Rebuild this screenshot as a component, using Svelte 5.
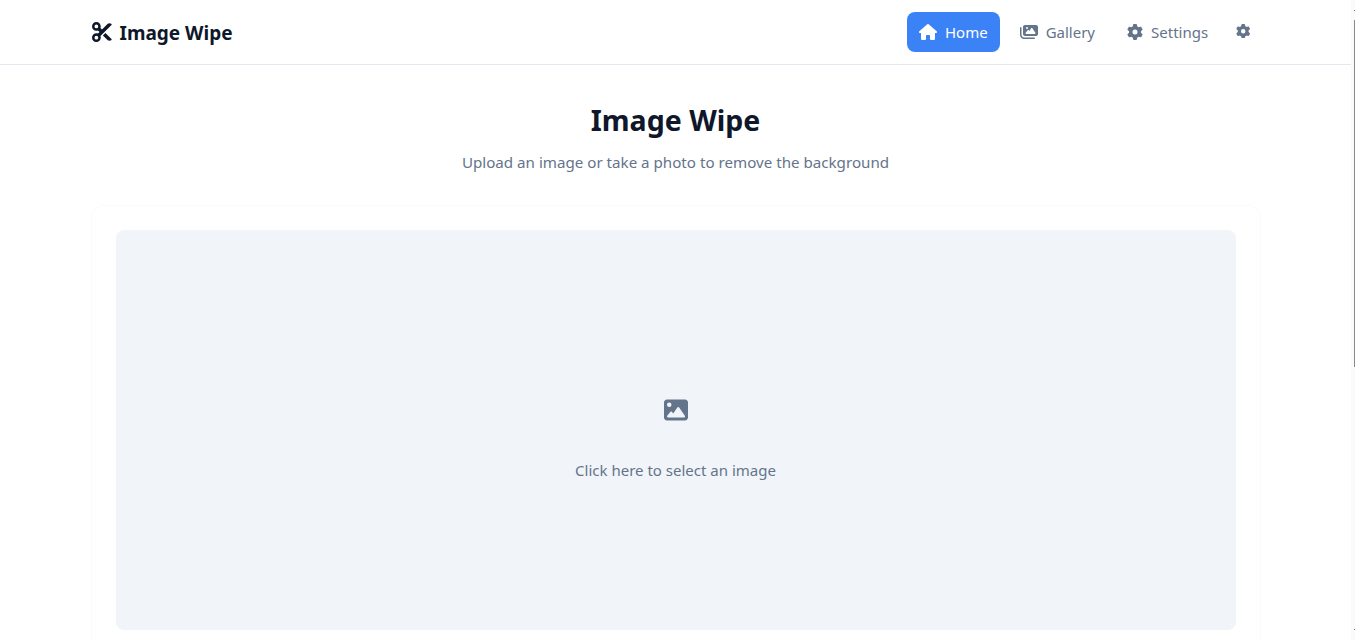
<script>
  const paths = {
    scissors:
      'M256 192l-39.500-39.500c4.900-12.600 7.500-26.200 7.500-40.500C224 50.100 173.900 0 112 0S0 50.100 0 112s50.100 112 112 112c14.300 0 27.900-2.700 40.500-7.500L192 256l-39.500 39.500c-12.600-4.900-26.200-7.500-40.500-7.500C50.100 288 0 338.100 0 400s50.100 112 112 112s112-50.100 112-112c0-14.300-2.700-27.900-7.500-40.500L499.200 76.800c7.100-7.100 7.100-18.500 0-25.600c-28.300-28.300-74.100-28.300-102.400 0L256 192zm22.600 150.600L396.800 460.800c28.300 28.300 74.100 28.300 102.400 0c7.100-7.100 7.100-18.500 0-25.600L342.600 278.600l-64 64zM64 112a48 48 0 1 1 96 0 48 48 0 1 1 -96 0zm48 240a48 48 0 1 1 0 96 48 48 0 1 1 0-96z',
    house:
      'M575.800 255.500c0 18-15 32.100-32 32.100h-32l.7 160.200c0 2.700-.2 5.400-.5 8.100V472c0 22.100-17.900 40-40 40H456c-1.100 0-2.200 0-3.300-.1c-1.400 .1-2.800 .1-4.200 .1H416 392c-22.100 0-40-17.900-40-40V448 384c0-17.700-14.300-32-32-32H256c-17.700 0-32 14.300-32 32v64 24c0 22.100-17.900 40-40 40H160 128.100c-1.500 0-3-.1-4.500-.2c-1.200 .1-2.400 .2-3.600 .2H104c-22.100 0-40-17.900-40-40V360c0-.9 0-1.900 .1-2.800V287.600H32c-18 0-32-14-32-32.100c0-9 3-17 10-24L266.400 8c7-7 15-8 22-8s15 2 21 7L564.800 231.500c8 7 12 15 11 24z',
    images:
      'M160 32c-35.300 0-64 28.700-64 64V320c0 35.300 28.700 64 64 64H512c35.300 0 64-28.700 64-64V96c0-35.300-28.700-64-64-64H160zM396 138.700l96 144c4.900 7.400 5.400 16.800 1.200 24.600S480.900 320 472 320H328 280 200c-9.200 0-17.600-5.300-21.600-13.600s-2.900-18.200 2.900-25.400l64-80c4.600-5.700 11.400-9 18.700-9s14.200 3.300 18.700 9l17.300 21.600 56-84C360.500 132 368 128 376 128s15.500 4 20 10.700zM192 128a32 32 0 1 1 64 0 32 32 0 1 1 -64 0zM48 120c0-13.300-10.700-24-24-24S0 106.700 0 120V344c0 75.100 60.900 136 136 136H456c13.300 0 24-10.700 24-24s-10.700-24-24-24H136c-48.600 0-88-39.400-88-88V120z',
    gear:
      'M495.900 166.600c3.200 8.700 .5 18.400-6.400 24.600l-43.300 39.400c1.100 8.300 1.700 16.800 1.700 25.400s-.6 17.100-1.700 25.400l43.300 39.400c6.900 6.200 9.600 15.900 6.400 24.600c-4.400 11.900-9.700 23.300-15.800 34.300l-4.700 8.100c-6.600 11-14 21.400-22.100 31.200c-5.900 7.200-15.700 9.600-24.500 6.800l-55.700-17.700c-13.400 10.300-28.200 18.900-44 25.400l-12.500 57.100c-2 9.100-9 16.300-18.200 17.800c-13.800 2.300-28 3.500-42.500 3.500s-28.700-1.200-42.500-3.500c-9.200-1.500-16.200-8.700-18.200-17.800l-12.500-57.100c-15.800-6.500-30.600-15.100-44-25.400L83.100 425.900c-8.800 2.800-18.600 .3-24.500-6.800c-8.100-9.800-15.500-20.200-22.100-31.200l-4.700-8.100c-6.100-11-11.400-22.400-15.800-34.300c-3.200-8.700-.5-18.400 6.400-24.600l43.300-39.400C64.600 273.100 64 264.600 64 256s.6-17.100 1.700-25.400L22.400 191.200c-6.900-6.200-9.600-15.900-6.400-24.600c4.400-11.900 9.700-23.300 15.800-34.300l4.700-8.100c6.600-11 14-21.400 22.100-31.200c5.900-7.200 15.700-9.600 24.500-6.800l55.700 17.700c13.400-10.300 28.200-18.900 44-25.400l12.500-57.100c2-9.100 9-16.300 18.200-17.800C227.300 1.200 241.500 0 256 0s28.700 1.200 42.500 3.500c9.200 1.500 16.200 8.700 18.200 17.800l12.500 57.100c15.800 6.500 30.600 15.100 44 25.400l55.700-17.700c8.800-2.800 18.600-.3 24.500 6.800c8.100 9.800 15.500 20.200 22.100 31.200l4.700 8.100c6.100 11 11.400 22.400 15.800 34.300zM256 336a80 80 0 1 0 0-160 80 80 0 1 0 0 160z',
    image:
      'M0 96C0 60.700 28.700 32 64 32H448c35.300 0 64 28.700 64 64V416c0 35.300-28.700 64-64 64H64c-35.300 0-64-28.700-64-64V96zM323.800 202.500c-4.500-6.600-11.900-10.500-19.800-10.500s-15.400 3.900-19.800 10.500l-87 127.600L170.700 297c-4.600-5.700-11.500-9-18.700-9s-14.200 3.300-18.700 9l-64 80c-5.800 7.200-6.900 17.100-2.900 25.400s12.400 13.600 21.600 13.600h96 32H424c8.900 0 17.100-4.900 21.200-12.800s3.600-17.400-1.400-24.700l-120-176zM112 192a48 48 0 1 0 0-96 48 48 0 1 0 0 96z'
  };

  const links = [
    { label: 'Home', icon: 'house', box: '0 0 576 512', wide: true, active: true },
    { label: 'Gallery', icon: 'images', box: '0 0 576 512', wide: true, active: false },
    { label: 'Settings', icon: 'gear', box: '0 0 512 512', wide: false, active: false }
  ];
</script>

<div class="page">
  <header class="topbar">
    <div class="topbar-inner">
      <div class="brand">
        <svg class="brand-icon" viewBox="0 0 512 512" fill="currentColor"><path d={paths.scissors} /></svg>
        <span>Image Wipe</span>
      </div>
      <nav class="nav">
        {#each links as link}
          <div class="nav-link" class:active={link.active}>
            <svg class="nav-icon" class:wide={link.wide} viewBox={link.box} fill="currentColor"><path d={paths[link.icon]} /></svg>
            <span>{link.label}</span>
          </div>
        {/each}
        <div class="theme-toggle">
          <svg viewBox="0 0 512 512" fill="currentColor"><path d={paths.gear} /></svg>
        </div>
      </nav>
    </div>
  </header>

  <main class="content">
    <h1>Image Wipe</h1>
    <p class="subtitle">Upload an image or take a photo to remove the background</p>

    <section class="card">
      <div class="dropzone">
        <svg class="picture-icon" viewBox="0 0 512 512" fill="currentColor"><path d={paths.image} /></svg>
        <p>Click here to select an image</p>
      </div>
    </section>
  </main>

  <div class="scrollbar"><div class="thumb"></div></div>
</div>

<style>
  :global(html),
  :global(body) {
    margin: 0;
    height: 100%;
    overflow: hidden;
    background: #ffffff;
  }

  .page {
    position: relative;
    height: 640px;
    overflow: hidden;
    padding-right: 4px;
    font-family: "Noto Sans", "Open Sans", sans-serif;
    color: #0f172a;
  }

  .topbar {
    height: 64px;
    border-bottom: 1px solid #e2e8f0;
  }

  .topbar-inner {
    box-sizing: border-box;
    max-width: 1200px;
    height: 100%;
    margin: 0 auto;
    padding: 0 16px;
    display: flex;
    align-items: center;
    justify-content: space-between;
  }

  .brand {
    display: flex;
    align-items: center;
    gap: 8px;
    font-size: 19px;
    font-weight: 700;
  }

  .brand span {
    margin-top: 2px;
  }

  .brand-icon {
    width: 20px;
    height: 20px;
  }

  .nav {
    display: flex;
    align-items: center;
    gap: 8px;
  }

  .nav-link {
    display: flex;
    align-items: center;
    gap: 8px;
    height: 40px;
    padding: 0 12px;
    border-radius: 8px;
    font-size: 15px;
    color: #64748b;
  }

  .nav-link.active {
    background: #3b82f6;
    color: #ffffff;
  }

  .nav-icon {
    width: 16px;
    height: 16px;
  }

  .nav-icon.wide {
    width: 18px;
  }

  .theme-toggle {
    display: flex;
    padding: 0 9px 2px 8px;
    color: #64748b;
  }

  .theme-toggle svg {
    width: 14.4px;
    height: 14.4px;
  }

  .content {
    box-sizing: border-box;
    max-width: 1200px;
    margin: 0 auto;
    padding: 32px 16px;
  }

  h1 {
    margin: 0;
    text-align: center;
    font-size: 28.5px;
    line-height: 46px;
    font-weight: 700;
  }

  .subtitle {
    margin: 6px 0 31px;
    text-align: center;
    font-size: 15.15px;
    line-height: 26px;
    color: #64748b;
  }

  .card {
    padding: 24px;
    border-radius: 12px;
    box-shadow: 0 0 0 1px #fafbfb;
  }

  .dropzone {
    box-sizing: border-box;
    height: 400px;
    padding-top: 21px;
    border-radius: 8px;
    background: #f1f5f9;
    display: flex;
    flex-direction: column;
    align-items: center;
    justify-content: center;
    color: #64748b;
  }

  .picture-icon {
    width: 24px;
    height: 24px;
    margin-bottom: 35px;
  }

  .dropzone p {
    margin: 0;
    font-size: 15px;
    line-height: 26px;
  }

  .scrollbar {
    position: absolute;
    top: 0;
    right: 0;
    bottom: 0;
    width: 4px;
    background: #fafafa;
  }

  .scrollbar::before,
  .scrollbar::after {
    content: "";
    position: absolute;
    left: 3px;
    width: 1px;
    height: 1px;
    background: #777777;
  }

  .scrollbar::before {
    top: 10px;
  }

  .scrollbar::after {
    top: 629px;
  }

  .thumb {
    position: absolute;
    top: 20px;
    left: 3px;
    width: 1px;
    height: 347px;
    background: #8a8a8a;
  }
</style>
